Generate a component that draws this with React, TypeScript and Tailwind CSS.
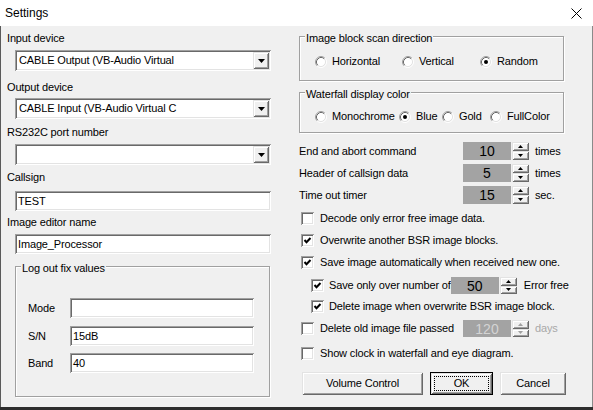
import React from "react";

const sunken =
  "bg-white shadow-[inset_1px_1px_0_#a0a0a0,inset_-1px_-1px_0_#ffffff,inset_2px_2px_0_#696969,inset_-2px_-2px_0_#e3e3e3]";
const raised =
  "bg-[#f0f0f0] shadow-[inset_1px_1px_0_#e3e3e3,inset_-1px_-1px_0_#696969,inset_2px_2px_0_#ffffff,inset_-2px_-2px_0_#a0a0a0]";
const groupBox =
  "relative border border-[#a0a0a0] shadow-[inset_1px_1px_0_#ffffff,1px_1px_0_#ffffff]";

const Label = ({ children, className = "" }: { children: React.ReactNode; className?: string }) => (
  <div className={`h-[13px] leading-[13px] whitespace-nowrap ${className}`}>{children}</div>
);

const Combo = ({ value, className = "" }: { value: string; className?: string }) => (
  <div className={`${sunken} ml-[8px] flex h-[21px] w-[256px] items-center ${className}`}>
    <span className="flex-1 truncate pl-[4px] leading-[21px]">{value}</span>
    <div className={`${raised} mr-[2px] flex h-[17px] w-[16px] items-center justify-center`}>
      <svg width="7" height="4" viewBox="0 0 7 4">
        <polygon points="0,0 7,0 3.5,4" fill="#000" />
      </svg>
    </div>
  </div>
);

const TextBox = ({ value, className = "" }: { value: string; className?: string }) => (
  <div className={`${sunken} h-[20px] pl-[3px] leading-[20px] ${className}`}>{value}</div>
);

const Legend = ({ children }: { children: React.ReactNode }) => (
  <div className="absolute top-[-5px] left-[5px] bg-[#f0f0f0] px-[1px] leading-[13px] whitespace-nowrap">
    {children}
  </div>
);

const Radio = ({ label, checked, className = "" }: { label: string; checked?: boolean; className?: string }) => (
  <div className={`flex items-center ${className}`}>
    <svg width="12" height="12" viewBox="0 0 12 12" className="shrink-0">
      <circle cx="6" cy="6" r="4.5" fill="#fff" />
      <path d="M2.11 9.89 A5.5 5.5 0 0 1 9.89 2.11" stroke="#a0a0a0" fill="none" />
      <path d="M9.89 2.11 A5.5 5.5 0 0 1 2.11 9.89" stroke="#ffffff" fill="none" />
      <path d="M2.82 9.18 A4.5 4.5 0 0 1 9.18 2.82" stroke="#696969" fill="none" />
      <path d="M9.18 2.82 A4.5 4.5 0 0 1 2.82 9.18" stroke="#e3e3e3" fill="none" />
      {checked && <circle cx="6" cy="6" r="2" fill="#000" />}
    </svg>
    <span className="ml-[5px] leading-[13px] whitespace-nowrap">{label}</span>
  </div>
);

const Check = ({ checked }: { checked?: boolean }) => (
  <div className={`${sunken} relative h-[13px] w-[13px] shrink-0`}>
    {checked && (
      <svg width="13" height="13" viewBox="0 0 13 13" className="absolute top-0 left-0">
        <polyline points="3.5,6 5.5,8.2 9.5,4" stroke="#000" strokeWidth="2" fill="none" />
      </svg>
    )}
  </div>
);

const Spin = ({ value, disabled }: { value: string; disabled?: boolean }) => (
  <div className="flex h-full">
    <div
      className={`w-[48px] bg-[#a3a3a3] text-center text-[14px] leading-[18px] tracking-normal ${
        disabled ? "text-[#d4d4d4]" : "text-black"
      }`}
    >
      {value}
    </div>
    <div className="ml-[1px] flex w-[17px] flex-col">
      <div className={`${raised} flex flex-1 items-center justify-center`}>
        <svg width="5" height="3" viewBox="0 0 5 3">
          <polygon points="0,3 5,3 2.5,0" fill={disabled ? "#a0a0a0" : "#000"} />
        </svg>
      </div>
      <div className={`${raised} flex flex-1 items-center justify-center`}>
        <svg width="5" height="3" viewBox="0 0 5 3">
          <polygon points="0,0 5,0 2.5,3" fill={disabled ? "#a0a0a0" : "#000"} />
        </svg>
      </div>
    </div>
  </div>
);

const SpinRow = ({ label, value, unit }: { label: string; value: string; unit: string }) => (
  <div className="flex h-[18px] items-center">
    <div className="w-[164px] leading-[13px] whitespace-nowrap">{label}</div>
    <Spin value={value} />
    <span className="ml-[6px] leading-[13px]">{unit}</span>
  </div>
);

export default function App() {
  return (
    <div className="h-[410px] w-[593px] bg-[#2d2d2d] font-['Liberation_Sans',Arial,sans-serif] text-[11px] tracking-[-0.15px] text-black">
      <div className="h-[407px] w-[593px] bg-[#f0f0f0] shadow-[inset_1px_0_0_#5a5a5a,inset_-1px_0_0_#8a8a8a]">
        {/* title bar */}
        <div className="flex h-[26px] items-center justify-between bg-white pl-[5px] pr-[11px]">
          <span className="text-[12px] tracking-normal">Settings</span>
          <svg width="11" height="11" viewBox="0 0 11 11">
            <path d="M0.5 0.5 L10.5 10.5 M10.5 0.5 L0.5 10.5" stroke="#000" strokeWidth="1" />
          </svg>
        </div>

        <div className="flex h-[381px]">
          {/* left column */}
          <div className="flex w-[271px] flex-col pl-[7px]">
            <Label className="mt-[6px]">Input device</Label>
            <Combo className="mt-[5px]" value="CABLE Output (VB-Audio Virtual" />
            <Label className="mt-[10px]">Output device</Label>
            <Combo className="mt-[4px]" value="CABLE Input (VB-Audio Virtual C" />
            <Label className="mt-[7px]">RS232C port number</Label>
            <Combo className="mt-[5px]" value="" />
            <Label className="mt-[6px]">Callsign</Label>
            <TextBox className="mt-[7px] ml-[8px] w-[256px]" value="TEST" />
            <Label className="mt-[5px]">Image editor name</Label>
            <TextBox className="mt-[5px] ml-[8px] w-[256px]" value="Image_Processor" />

            <div className={`${groupBox} mt-[12px] ml-[8px] flex h-[131px] w-[255px] flex-col pt-[31px] pl-[12px]`}>
              <Legend>Log out fix values</Legend>
              <div className="flex h-[20px] items-center">
                <span className="w-[42px]">Mode</span>
                <TextBox className="w-[184px]" value="" />
              </div>
              <div className="mt-[8px] flex h-[20px] items-center">
                <span className="w-[42px]">S/N</span>
                <TextBox className="w-[184px]" value="15dB" />
              </div>
              <div className="mt-[7px] flex h-[20px] items-center">
                <span className="w-[42px]">Band</span>
                <TextBox className="w-[184px]" value="40" />
              </div>
            </div>
          </div>

          {/* right column */}
          <div className="ml-[28px] flex w-[268px] flex-col">
            <div className={`${groupBox} mt-[10px] h-[45px] w-[265px] pt-[18px] pl-[15px]`}>
              <Legend>Image block scan direction</Legend>
              <div className="flex h-[13px] items-center">
                <Radio className="w-[87px]" label="Horizontal" />
                <Radio className="w-[78px]" label="Vertical" />
                <Radio label="Random" checked />
              </div>
            </div>

            <div className={`${groupBox} mt-[11px] h-[41px] w-[265px] pt-[17px] pl-[15px]`}>
              <Legend>Waterfall display color</Legend>
              <div className="flex h-[13px] items-center">
                <Radio className="w-[84px]" label="Monochrome" />
                <Radio className="w-[43px]" label="Blue" checked />
                <Radio className="w-[48px]" label="Gold" />
                <Radio label="FullColor" />
              </div>
            </div>

            <div className="mt-[9px]">
              <SpinRow label="End and abort command" value="10" unit="times" />
            </div>
            <div className="mt-[4px]">
              <SpinRow label="Header of callsign data" value="5" unit="times" />
            </div>
            <div className="mt-[4px]">
              <SpinRow label="Time out timer" value="15" unit="sec." />
            </div>

            <div className="mt-[6px] flex h-[16px] items-center pl-[2px]">
              <Check />
              <span className="ml-[6px] whitespace-nowrap">Decode only error free image data.</span>
            </div>
            <div className="mt-[6px] flex h-[16px] items-center pl-[2px]">
              <Check checked />
              <span className="ml-[6px] whitespace-nowrap">Overwrite another BSR image blocks.</span>
            </div>
            <div className="mt-[6px] flex h-[16px] items-center pl-[2px]">
              <Check checked />
              <span className="ml-[6px] whitespace-nowrap">Save image automatically when received new one.</span>
            </div>
            <div className="mt-[7px] flex h-[17px] items-center pl-[12px]">
              <div className="flex w-[152px] items-center">
                <Check checked />
                <span className="ml-[5px] whitespace-nowrap">Save only over number of</span>
              </div>
              <Spin value="50" />
              <span className="ml-[7px] whitespace-nowrap">Error free</span>
            </div>
            <div className="mt-[4px] flex h-[16px] items-center pl-[12px]">
              <Check checked />
              <span className="ml-[5px] whitespace-nowrap">Delete image when overwrite BSR image block.</span>
            </div>
            <div className="mt-[6px] flex h-[17px] items-center pl-[2px]">
              <div className="flex w-[162px] items-center">
                <Check />
                <span className="ml-[6px] whitespace-nowrap">Delete old image file passed</span>
              </div>
              <Spin value="120" disabled />
              <span className="ml-[6px] text-[#a8a8a8]">days</span>
            </div>
            <div className="mt-[8px] flex h-[16px] items-center pl-[2px]">
              <Check />
              <span className="ml-[6px] whitespace-nowrap">Show clock in waterfall and eye diagram.</span>
            </div>

            <div className="mt-[11px] ml-[3px] flex h-[23px]">
              <button className={`${raised} h-[23px] w-[121px]`}>Volume Control</button>
              <button className="relative ml-[7px] h-[23px] w-[63px] border border-black">
                <div className={`${raised} flex h-full w-full items-center justify-center`}>
                  <div className="absolute inset-[3px] border border-dotted border-black" />
                  OK
                </div>
              </button>
              <button className={`${raised} ml-[7px] h-[23px] w-[66px]`}>Cancel</button>
            </div>
          </div>
        </div>
      </div>
    </div>
  );
}
